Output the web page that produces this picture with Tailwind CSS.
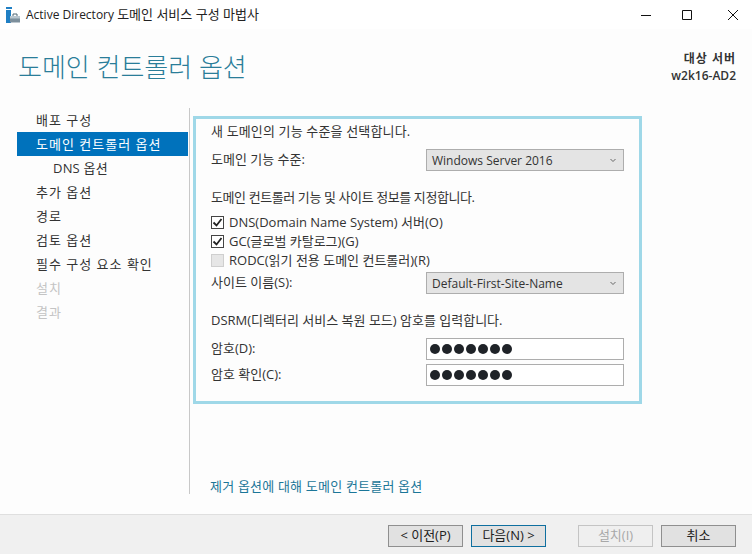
<!DOCTYPE html>
<html lang="ko">
  <head>
    <meta charset="UTF-8" />
    <title>Active Directory 도메인 서비스 구성 마법사</title>
    <script src="https://cdn.jsdelivr.net/npm/@tailwindcss/browser@4"></script>
  </head>
  <body class="w-[752px] h-[554px] overflow-hidden flex flex-col bg-white text-[13px] text-[#333] font-['Open_Sans','Noto_Sans_CJK_KR',sans-serif]">
    <!-- title bar -->
    <div class="h-[29px] flex items-center bg-white shrink-0">
      <svg class="ml-[6px] w-[14px] h-[16px]" viewBox="0 0 14 16">
        <path d="M0 0h6v2H0zM0 3h5v13H0z" fill="#1f7fc4" />
        <path d="M4 9h10v6.5H4z" fill="#7d8f9c" />
        <path d="M4 9h10v2.5H4z" fill="#b9c6cf" />
        <path d="M7 9V7h4v2" fill="none" stroke="#4f6675" stroke-width="1" />
      </svg>
      <span class="ml-[6px] text-[12px] text-[#222]">Active Directory <span class="text-[13px]">도메인 서비스 구성 마법사</span></span>
      <div class="ml-auto flex items-center">
        <svg class="w-[12px] h-[12px] mr-[29px]" viewBox="0 0 12 12"><path d="M1 6.5h10" stroke="#111" stroke-width="1" /></svg>
        <svg class="w-[12px] h-[12px] mr-[34px]" viewBox="0 0 12 12"><path d="M1.5 1.5h9v9h-9z" fill="none" stroke="#111" stroke-width="1" /></svg>
        <svg class="w-[12px] h-[12px] mr-[13px]" viewBox="0 0 12 12"><path d="M1 1l10 10M11 1L1 11" stroke="#111" stroke-width="1" /></svg>
      </div>
    </div>

    <div class="flex-1 flex flex-col bg-[#fdfdfd] min-h-0">
      <!-- header -->
      <div class="h-[79px] shrink-0 flex justify-between">
        <h1 class="ml-[18px] mt-[19px] text-[26px] leading-[38px] font-light text-[#2a7d99]">도메인 컨트롤러 옵션</h1>
        <div class="mr-[16px] mt-[21px] text-right font-semibold text-[12px] leading-[17px] text-[#333]">
          <div class="tracking-[1px]">대상 서버</div>
          <div>w2k16-AD2</div>
        </div>
      </div>

      <!-- main -->
      <div class="flex-1 flex min-h-0">
        <div class="w-[190px] shrink-0 h-[386px] border-r border-[#c8c8c8]">
          <ul class="ml-[17px] mr-[1px] leading-[25px] tracking-[1px]">
            <li class="h-[24px] pl-[19px]">배포 구성</li>
            <li class="h-[24px] pl-[19px] bg-[#0072bc] text-white">도메인 컨트롤러 옵션</li>
            <li class="h-[24px] pl-[36px] tracking-[0.2px]">DNS 옵션</li>
            <li class="h-[24px] pl-[19px]">추가 옵션</li>
            <li class="h-[24px] pl-[19px]">경로</li>
            <li class="h-[24px] pl-[19px]">검토 옵션</li>
            <li class="h-[24px] pl-[19px]">필수 구성 요소 확인</li>
            <li class="h-[24px] pl-[19px] text-[#c4c4c4]">설치</li>
            <li class="h-[24px] pl-[19px] text-[#c4c4c4]">결과</li>
          </ul>
        </div>

        <div class="flex-1 flex flex-col">
          <!-- options box -->
          <div class="ml-[3px] mt-[8px] w-[449px] h-[288px] border-[3px] border-[#9fd8e8] pl-[15px] flex flex-col">
            <div class="h-[24px] leading-[25px] tracking-[0.15px]">새 도메인의 기능 수준을 선택합니다.</div>
            <div class="mt-[6px] flex items-center justify-between">
              <span>도메인 기능 수준:</span>
              <div class="w-[198px] h-[22px] mr-[15px] px-[5px] pt-px flex items-center justify-between bg-[#e4e4e4] border border-[#adadad] text-[12px]">
                <span>Windows Server 2016</span>
                <svg class="w-[6px] h-[5px] mr-[2px]" viewBox="0 0 6 5"><path d="M.5 1l2.5 2.5L5.5 1" fill="none" stroke="#666" stroke-width="1" /></svg>
              </div>
            </div>
            <div class="mt-[14px] h-[24px] leading-[24px] tracking-[-0.4px]">도메인 컨트롤러 기능 및 사이트 정보를 지정합니다.</div>
            <div class="mt-[3px] h-[19.5px] pt-px flex items-center gap-[5px]">
              <span class="w-[13px] h-[13px] bg-white border border-[#444] flex items-center justify-center">
                <svg class="w-[11px] h-[11px]" viewBox="0 0 11 11"><path d="M1.5 5.5l3 3 5-6.5" fill="none" stroke="#222" stroke-width="1.8" /></svg>
              </span>
              <span>DNS(Domain Name System) 서버(O)</span>
            </div>
            <div class="h-[19.5px] flex items-center gap-[5px]">
              <span class="w-[13px] h-[13px] bg-white border border-[#444] flex items-center justify-center">
                <svg class="w-[11px] h-[11px]" viewBox="0 0 11 11"><path d="M1.5 5.5l3 3 5-6.5" fill="none" stroke="#222" stroke-width="1.8" /></svg>
              </span>
              <span>GC(글로벌 카탈로그)(G)</span>
            </div>
            <div class="h-[19.5px] flex items-center gap-[5px]">
              <span class="w-[13px] h-[13px] bg-[#e6e6e6] border border-[#cfcfcf]"></span>
              <span>RODC(읽기 전용 도메인 컨트롤러)(R)</span>
            </div>
            <div class="mt-[1px] flex items-center justify-between">
              <span>사이트 이름(S):</span>
              <div class="w-[198px] h-[22px] mr-[15px] px-[5px] pt-[2px] flex items-center justify-between bg-[#e4e4e4] border border-[#adadad] text-[12px]">
                <span>Default-First-Site-Name</span>
                <svg class="w-[6px] h-[5px] mr-[2px]" viewBox="0 0 6 5"><path d="M.5 1l2.5 2.5L5.5 1" fill="none" stroke="#666" stroke-width="1" /></svg>
              </div>
            </div>
            <div class="mt-[14px] h-[24px] leading-[24px]">DSRM(디렉터리 서비스 복원 모드) 암호를 입력합니다.</div>
            <div class="mt-[6px] flex items-center justify-between">
              <span>암호(D):</span>
              <div class="w-[198px] h-[22px] mr-[15px] pl-[3px] flex items-center gap-[2px] bg-white border border-[#adadad]">
                <i class="w-[10px] h-[10px] rounded-full bg-[#1f2328]"></i><i class="w-[10px] h-[10px] rounded-full bg-[#1f2328]"></i><i class="w-[10px] h-[10px] rounded-full bg-[#1f2328]"></i><i class="w-[10px] h-[10px] rounded-full bg-[#1f2328]"></i><i class="w-[10px] h-[10px] rounded-full bg-[#1f2328]"></i><i class="w-[10px] h-[10px] rounded-full bg-[#1f2328]"></i><i class="w-[10px] h-[10px] rounded-full bg-[#1f2328]"></i>
              </div>
            </div>
            <div class="mt-[4px] flex items-center justify-between">
              <span class="pt-px">암호 확인(C):</span>
              <div class="w-[198px] h-[22px] mr-[15px] pl-[3px] flex items-center gap-[2px] bg-white border border-[#adadad]">
                <i class="w-[10px] h-[10px] rounded-full bg-[#1f2328]"></i><i class="w-[10px] h-[10px] rounded-full bg-[#1f2328]"></i><i class="w-[10px] h-[10px] rounded-full bg-[#1f2328]"></i><i class="w-[10px] h-[10px] rounded-full bg-[#1f2328]"></i><i class="w-[10px] h-[10px] rounded-full bg-[#1f2328]"></i><i class="w-[10px] h-[10px] rounded-full bg-[#1f2328]"></i><i class="w-[10px] h-[10px] rounded-full bg-[#1f2328]"></i>
              </div>
            </div>
          </div>
          <a class="ml-[20px] mt-[70px] leading-[24px] tracking-[0.2px] text-[#1b7698]">제거 옵션에 대해 도메인 컨트롤러 옵션</a>
        </div>
      </div>
    </div>

    <!-- footer -->
    <div class="h-[40px] shrink-0 bg-[#f0f0f0] border-t border-[#dfdfdf] flex items-start pt-[10px] pl-[388px]">
      <button class="w-[75px] h-[22px] bg-[#e1e1e1] border border-[#8f8f8f] text-[#222]">&lt; 이전(P)</button>
      <button class="ml-[8px] w-[75px] h-[22px] bg-[#e1e1e1] border border-[#0f6f9f] text-[#222]">다음(N) &gt;</button>
      <button class="ml-[32px] w-[75px] h-[22px] bg-[#efefef] border border-[#c4c4c4] text-[#a8a8a8]">설치(I)</button>
      <button class="ml-[8px] w-[75px] h-[22px] bg-[#e1e1e1] border border-[#8f8f8f] text-[#222]">취소</button>
    </div>
  </body>
</html>
